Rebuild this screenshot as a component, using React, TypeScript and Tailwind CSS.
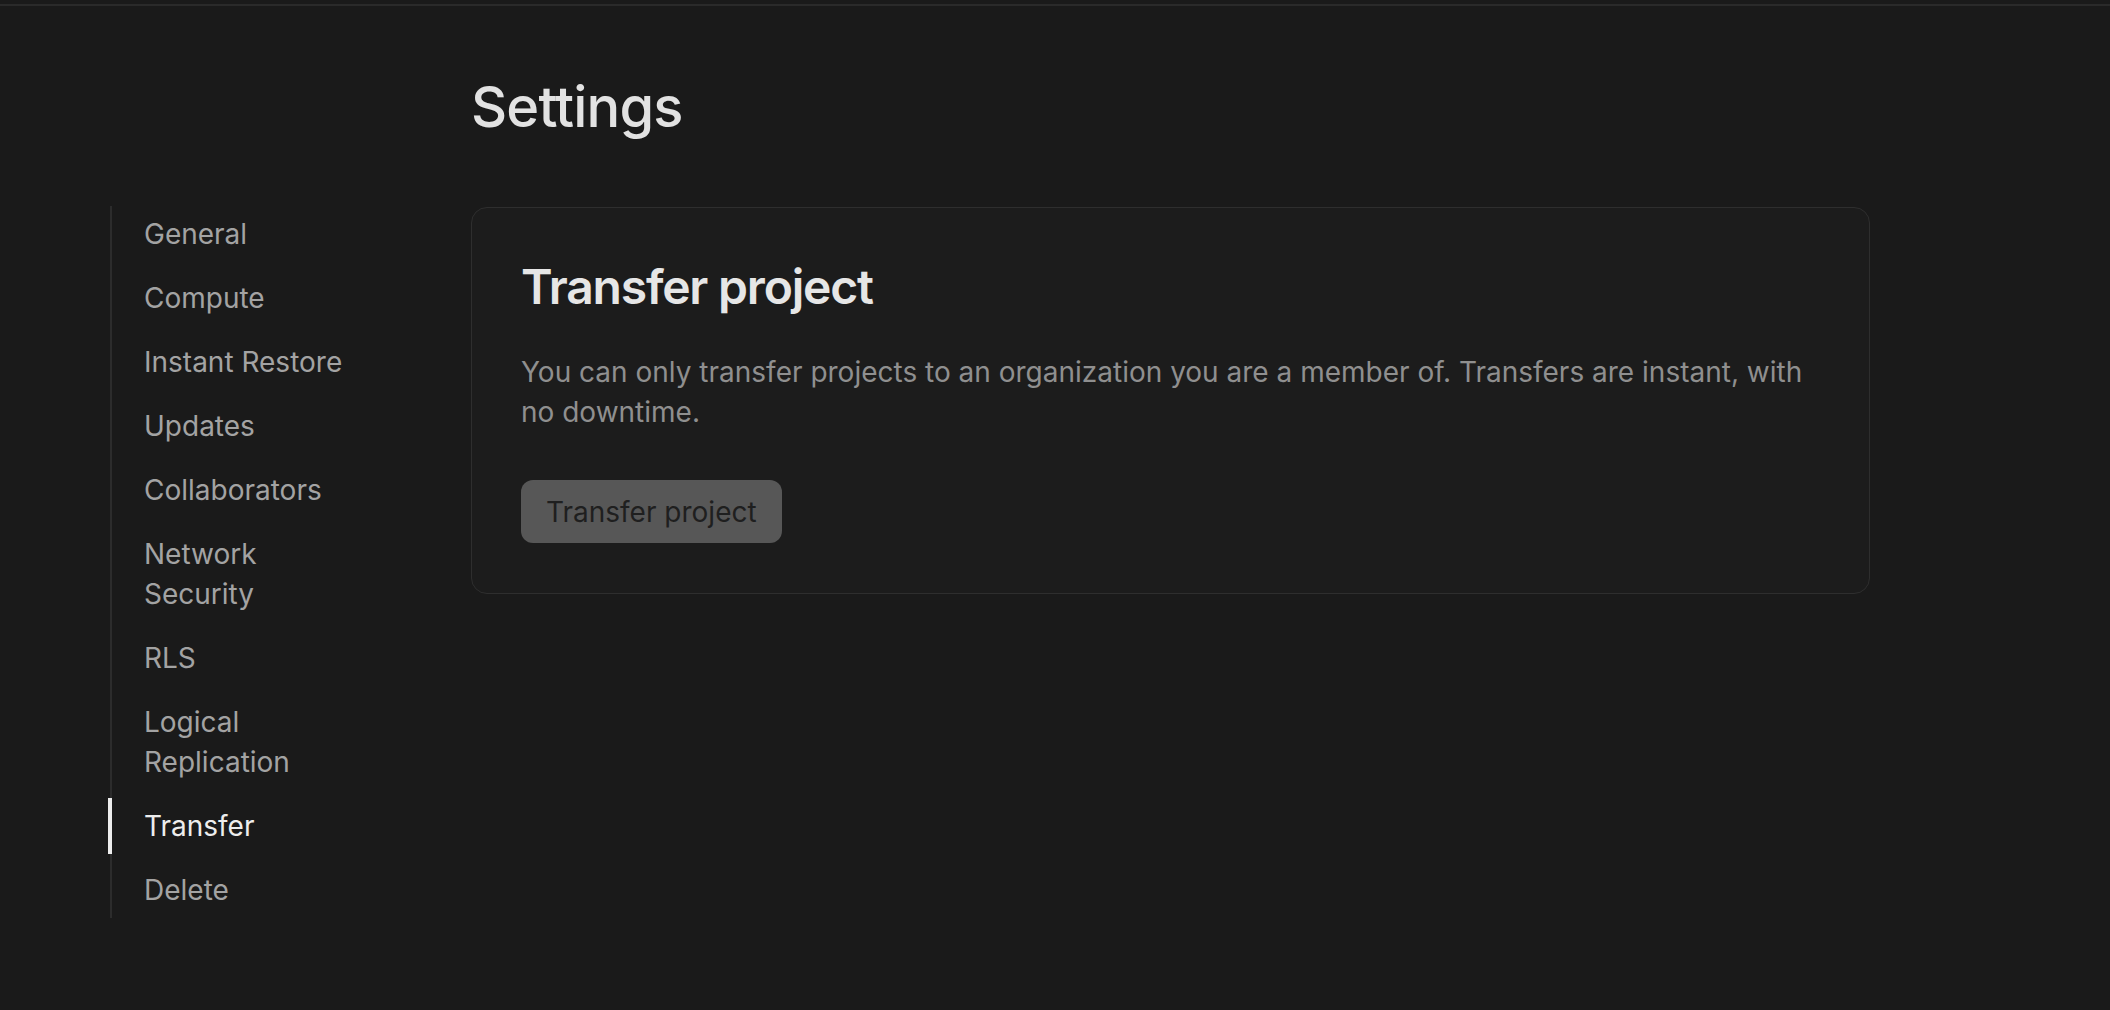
import React from "react";

const navItems = [
  "General",
  "Compute",
  "Instant Restore",
  "Updates",
  "Collaborators",
  "Network Security",
  "RLS",
  "Logical Replication",
  "Transfer",
  "Delete",
];

function SettingsNav({ active }: { active: string }) {
  return (
    <nav className="w-[251px] border-l-2 border-[#2c2c2c] flex flex-col gap-2">
      {navItems.map((item) => {
        const isActive = item === active;
        return (
          <a
            key={item}
            href="#"
            className={
              isActive
                ? "relative block py-2 pl-[32px] text-[28px] leading-[40px] text-[#ededed]"
                : "relative block py-2 pl-[32px] text-[28px] leading-[40px] text-[#a3a3a3]"
            }
          >
            {isActive && (
              <span className="absolute left-[-4px] top-0 h-full w-[4px] bg-[#ededed]" />
            )}
            {item}
          </a>
        );
      })}
    </nav>
  );
}

export default function App() {
  return (
    <div
      className="min-h-screen bg-[#1a1a1a]"
      style={{ fontFamily: "Inter, 'Noto Sans', sans-serif" }}
    >
      <div className="h-[4px]" />
      <div className="h-[2px] bg-[#2a2a2a]" />

      <div className="flex pt-[67px]">
        <aside className="w-[471px] shrink-0 pl-[110px] pt-[133px]">
          <SettingsNav active="Transfer" />
        </aside>

        <main className="flex-1">
          <h1 className="text-[56px] leading-[68px] font-medium text-[#e2e2e2] tracking-[-0.015em]">
            Settings
          </h1>

          <section className="mt-[66px] w-[1399px] rounded-[16px] border border-[#2e2e2e] bg-[#1c1c1c] pl-[49px] pr-[50px] pt-[50px] pb-[50px]">
            <h2 className="text-[48px] leading-[58px] font-semibold text-[#e6e6e6] tracking-[-0.025em]">
              Transfer project
            </h2>
            <p className="mt-[36px] text-[28px] leading-[40px] text-[#8f8f8f]">
              You can only transfer projects to an organization you are a
              member of. Transfers are instant, with no downtime.
            </p>
            <button
              type="button"
              className="mt-[48px] h-[63px] rounded-[12px] bg-[#575757] px-[25px] text-[28px] text-[#1f1f1f]"
            >
              Transfer project
            </button>
          </section>
        </main>
      </div>
    </div>
  );
}
